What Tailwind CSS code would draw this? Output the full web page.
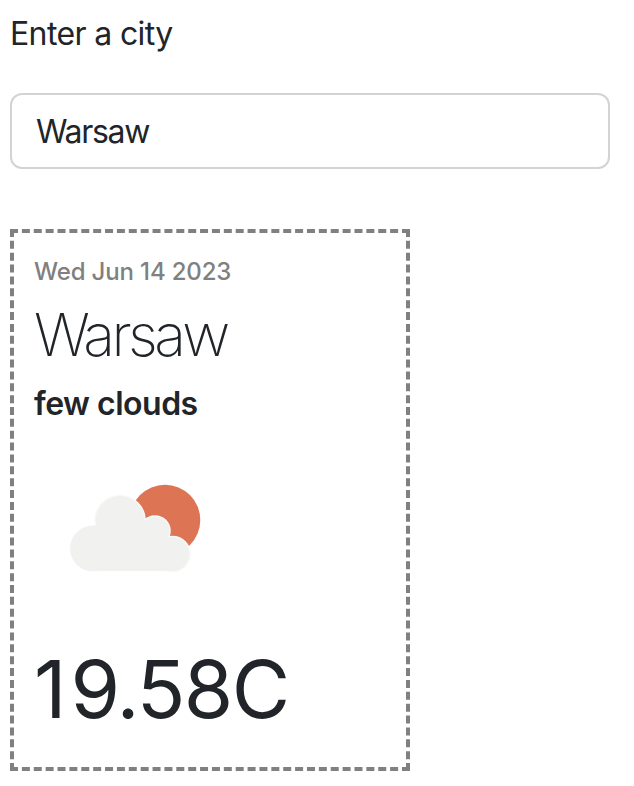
<!DOCTYPE html>
<html lang="en"><head><meta charset="utf-8"><title>Weather</title>
<script src="https://cdn.jsdelivr.net/npm/@tailwindcss/browser@4"></script></head>
<body class="bg-white text-[#212529] font-[Inter,sans-serif] pl-[10px] pt-[10px] overflow-hidden">
<label for="city" class="block text-[32px] leading-[48px] tracking-[-0.63px]">Enter a city</label>
<input id="city" value="Warsaw" class="block mt-[35px] w-[600px] h-[76px] rounded-[12px] border-2 border-[#d1d3d5] pl-[24px] pr-[25px] pt-[1px] text-[32px] tracking-[-1.3px]">
<section class="mt-[60px] w-[400px] h-[542px] border-4 border-dashed border-[#808080] px-[20px] pt-[21px]">
<p class="text-[24px] leading-[36px] text-[#808080] font-medium tracking-[-0.15px]">Wed Jun 14 2023</p>
<h1 class="text-[59px] leading-[72px] font-extralight mt-[9px] tracking-[-3.6px]">Warsaw</h1>
<p class="text-[32px] leading-[48px] font-semibold tracking-[-0.5px] mt-[9px]">few clouds</p>
<svg class="block w-[200px] h-[200px]" viewBox="34 428 200 200" role="img" aria-label="few clouds">
<circle cx="165" cy="520" r="35.3" fill="#dd7555"/>
<g fill="#f1f1f0" stroke="#f8faf9" stroke-width="2.5">
<circle cx="120" cy="520.5" r="24.5"/><circle cx="155" cy="531" r="14.5"/><circle cx="172.5" cy="554" r="17"/>
</g>
<g fill="#f1f1f0">
<circle cx="93" cy="548.5" r="23"/><circle cx="120" cy="520.5" r="24.5"/><circle cx="155" cy="531" r="14.5"/><circle cx="172.5" cy="554" r="17"/>
<path d="M93 571V530L120 520L156 525L173 545V571Z"/>
</g>
</svg>
<p class="text-[80px] leading-[96px] mt-[13px] tracking-[-1.6px]"><span class="tracking-[4px]">1</span>9.58C</p>
</section></body></html>
